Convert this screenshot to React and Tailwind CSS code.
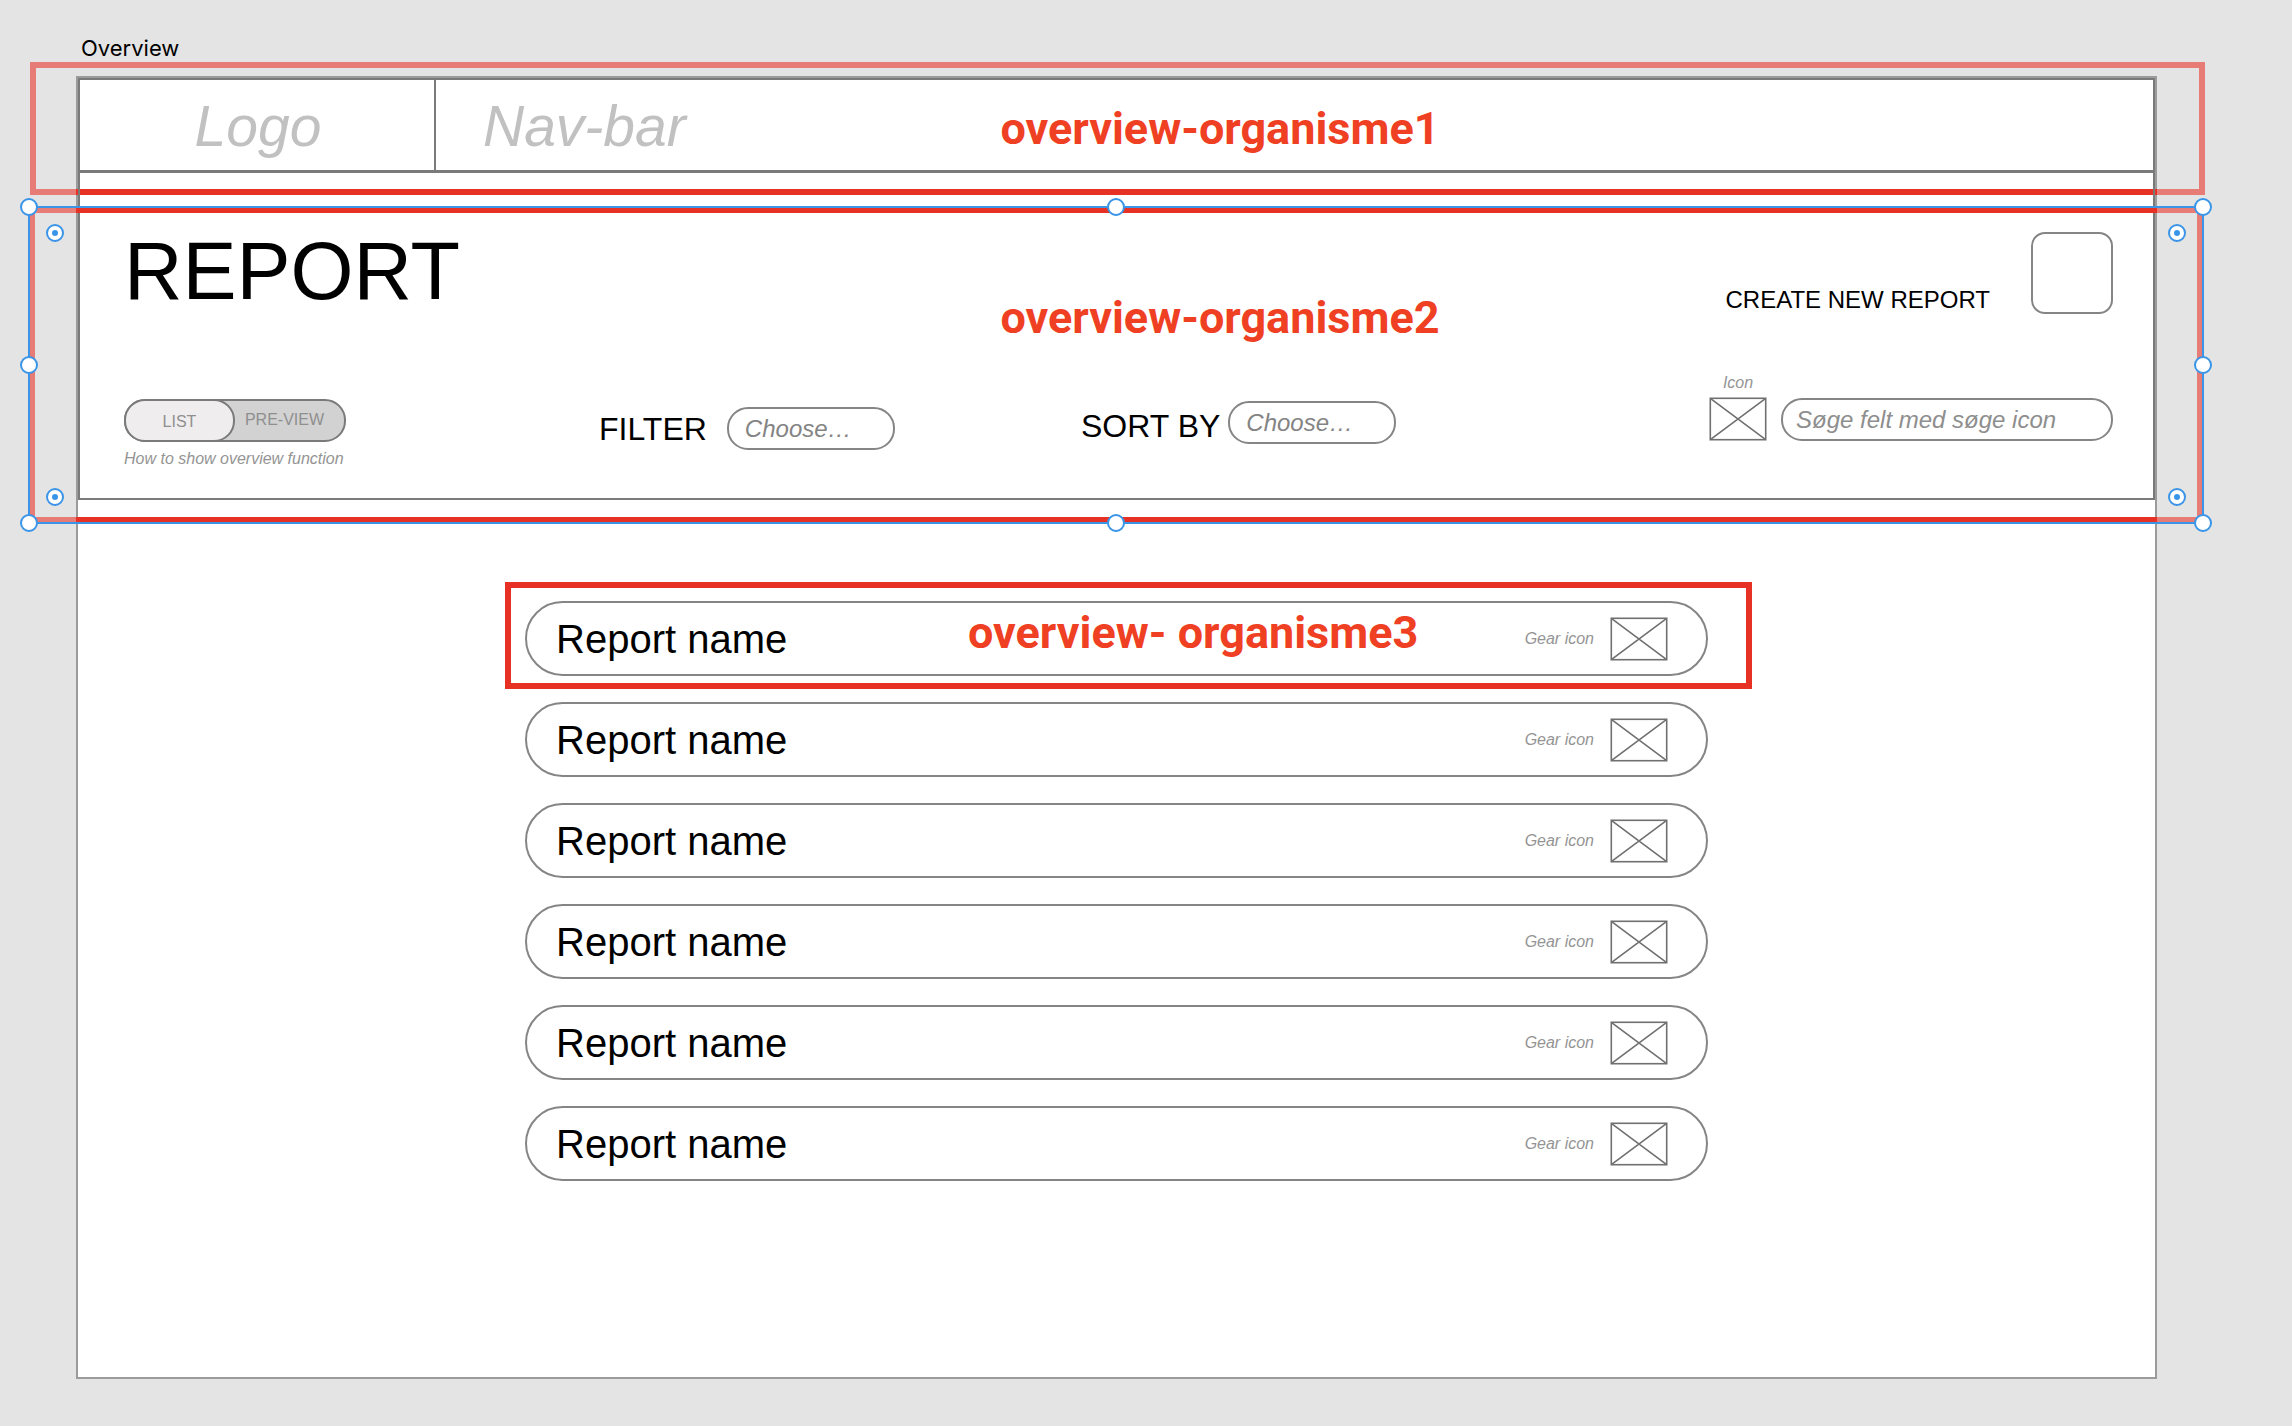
import React from "react";

const rows = [1, 2, 3, 4, 5, 6];

function CrossBox() {
  return (
    <svg width="58" height="44" viewBox="0 0 58 44" fill="none" stroke="#707070" strokeWidth="1.6" aria-hidden="true">
      <rect x="1.3" y="1.3" width="55.4" height="41.4" />
      <path d="M1.3 1.3 56.7 42.7M56.7 1.3 1.3 42.7" />
    </svg>
  );
}

function Tag({ className, children }) {
  return (
    <p className={`absolute z-10 whitespace-nowrap font-[Roboto,sans-serif] text-[45px] leading-[52px] font-bold text-[#ef4023] ${className}`}>
      {children}
    </p>
  );
}

function Handle({ className }) {
  return <span className={`absolute size-[18px] rounded-full border-2 border-[#3a95e8] bg-white ${className}`} />;
}

function RadiusHandle({ className }) {
  return (
    <span className={`absolute flex size-[18px] items-center justify-center rounded-full border-2 border-[#3a95e8] bg-white ${className}`}>
      <span className="size-[6px] rounded-full bg-[#3a95e8]" />
    </span>
  );
}

function Selection() {
  return (
    <div className="pointer-events-none absolute top-[33px] -right-[51px] -bottom-[26px] -left-[52px] z-30 border-2 border-[#3a95e8]">
      <Handle className="-top-[10px] -left-[10px]" />
      <Handle className="-top-[10px] left-1/2 -ml-[9px]" />
      <Handle className="-top-[10px] -right-[10px]" />
      <Handle className="top-1/2 -left-[10px] -mt-[9px]" />
      <Handle className="top-1/2 -right-[10px] -mt-[9px]" />
      <Handle className="-bottom-[10px] -left-[10px]" />
      <Handle className="-bottom-[10px] left-1/2 -ml-[9px]" />
      <Handle className="-right-[10px] -bottom-[10px]" />
      <RadiusHandle className="top-[16px] left-[16px]" />
      <RadiusHandle className="top-[16px] right-[16px]" />
      <RadiusHandle className="bottom-[16px] left-[16px]" />
      <RadiusHandle className="right-[16px] bottom-[16px]" />
    </div>
  );
}

function Choose({ id }) {
  return (
    <select
      id={id}
      className="h-[43px] w-[168px] appearance-none rounded-[21px] border-2 border-[#858585] bg-white px-[16px] text-[24px] leading-[36px] text-[#848484] italic"
    >
      <option>Choose…</option>
    </select>
  );
}

export default function App() {
  return (
    <div className="min-h-screen overflow-x-hidden bg-[#e4e4e4] pt-[36px] pr-[135px] pb-[47px] pl-[76px] font-['Liberation_Sans',Arial,sans-serif] text-black">
      <p className="relative z-30 pb-[16px] pl-[5px] font-[Inter,sans-serif] text-[22px] leading-[24px]">Overview</p>

      <main className="relative min-h-[1303px] border-2 border-[#9b9b9b] bg-white">
        {/* fades whatever extends past the artboard */}
        <div className="pointer-events-none absolute -inset-[2px] z-20 outline-[70px] outline-[#e4e4e4]/42" />

        <header className="relative flex h-[95px] border-2 border-b-[3px] border-[#7a7a7a]">
          <div className="flex w-[356px] items-center justify-center border-r-2 border-[#7a7a7a] pt-[2px] pl-[2px] text-[57px] leading-[64px] text-[#c1c1c1] italic">
            Logo
          </div>
          <nav className="flex items-center pt-[2px] pl-[47px] text-[57px] leading-[64px] text-[#c1c1c1] italic">Nav-bar</nav>
          <Tag className="top-[23px] left-[44.4%]">overview-organisme1</Tag>
          <div className="pointer-events-none absolute -top-[18px] -right-[52px] -bottom-[25px] -left-[50px] border-[6px] border-[#e73125]" />
        </header>

        <section className="relative h-[327px] border-2 border-t-0 border-[#7a7a7a] pt-[52px] pr-[40px] pl-[44px]">
          <div className="flex items-start justify-between">
            <h1 className="text-[81px] leading-[92px]">REPORT</h1>
            <div className="flex gap-[41px] pt-[7px]">
              <label htmlFor="create" className="pt-[54px] text-[24px] leading-[27px]">
                CREATE NEW REPORT
              </label>
              <button id="create" type="button" className="size-[82px] rounded-[14px] border-2 border-[#858585] bg-white" />
            </div>
          </div>

          <div className="grid grid-cols-[475fr_482fr_628fr_404fr] items-start pt-[57px]">
            <div className="pt-[25px]">
              <div className="flex h-[43px] w-[222px] rounded-[21px] border-2 border-[#7a7a7a] bg-[#d2d2d2] text-[16px] leading-[18px] text-[#8f8f8f]">
                <button type="button" className="-my-[2px] -ml-[2px] w-[111px] rounded-[21px] border-2 border-[#7a7a7a] bg-[#efedee] pt-[2px]">
                  LIST
                </button>
                <button type="button" className="flex-1 pr-[10px] pb-[2px] whitespace-nowrap">
                  PRE-VIEW
                </button>
              </div>
              <p className="pt-[8px] text-[16px] leading-[18px] text-[#949494] italic">How to show overview function</p>
            </div>

            <div className="flex items-center gap-[20px] pt-[33px]">
              <label htmlFor="filter" className="text-[32px] leading-[36px]">
                FILTER
              </label>
              <Choose id="filter" />
            </div>

            <div className="flex items-center gap-[8px] pt-[27px]">
              <label htmlFor="sort" className="pt-[6px] text-[32px] leading-[36px] whitespace-nowrap">
                SORT BY
              </label>
              <Choose id="sort" />
            </div>

            <div className="flex min-w-0 items-end gap-[14px]">
              <div className="flex shrink-0 flex-col items-center gap-[5px] text-[16px] leading-[18px] text-[#949494] italic">
                <span>Icon</span>
                <CrossBox />
              </div>
              <input
                type="search"
                aria-label="Søge felt"
                placeholder="Søge felt med søge icon"
                className="h-[43px] min-w-0 flex-1 rounded-[21px] border-2 border-[#858585] bg-white px-[13px] text-[24px] italic placeholder:text-[#8e8e8e]"
              />
            </div>
          </div>

          <Tag className="top-[119px] left-[44.4%]">overview-organisme2</Tag>
          <div className="pointer-events-none absolute top-[34px] -right-[50px] -bottom-[25px] -left-[51px] border-[6px] border-[#e73125]" />
          <Selection />
        </section>

        <ul className="mx-auto flex w-full max-w-[1183px] flex-col gap-[26px] pt-[101px] pb-[40px]">
          {rows.map((n) => (
            <li key={n} className="relative flex h-[75px] items-center rounded-[38px] border-2 border-[#858585] pr-[38px] pl-[29px]">
              <span className="flex-1 text-[40px] leading-[46px]">Report name</span>
              <span className="pr-[16px] text-[16px] leading-[18px] text-[#949494] italic">Gear icon</span>
              <button type="button" aria-label="Gear icon">
                <CrossBox />
              </button>
              {n === 1 && (
                <>
                  <Tag className="top-[4px] left-[441px]">overview- organisme3</Tag>
                  <div className="pointer-events-none absolute -top-[21px] -right-[46px] -bottom-[15px] -left-[22px] border-[6px] border-[#e73125]" />
                </>
              )}
            </li>
          ))}
        </ul>
      </main>
    </div>
  );
}
